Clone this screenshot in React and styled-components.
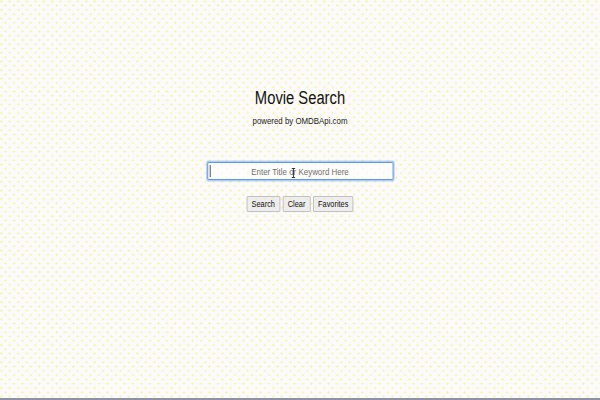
import React from 'react';
import styled, { createGlobalStyle } from 'styled-components';

const GlobalStyle = createGlobalStyle`
  html, body {
    margin: 0;
    padding: 0;
    height: 100%;
  }
  body {
    font-family: "Liberation Sans", Arial, sans-serif;
    background-color: #fbfbfe;
    background-image:
      radial-gradient(circle, #fff07a 0.7px, transparent 1.3px),
      radial-gradient(circle, #fff07a 0.7px, transparent 1.3px);
    background-size: 8.5px 8.6px;
    background-position: -3px -3px, 1.25px 1.3px;
  }
`;

const Page = styled.div`
  min-height: 100vh;
  display: flex;
  flex-direction: column;
  box-sizing: border-box;
`;

const Main = styled.main`
  display: flex;
  flex-direction: column;
  align-items: center;
  padding-top: 88px;
  transform: scaleX(0.82);
  transform-origin: 300px 0;
`;

const Title = styled.h1`
  margin: 0;
  font-size: 18px;
  line-height: 20px;
  font-weight: 400;
  color: #111;
`;

const Subtitle = styled.p`
  margin: 7px 0 0;
  font-size: 9.6px;
  line-height: 12px;
  color: #222;
`;

const SearchBox = styled.div`
  position: relative;
  margin-top: 35px;
`;

const Input = styled.input`
  display: block;
  width: 227px;
  height: 18px;
  box-sizing: border-box;
  padding: 0 4px;
  border: 1px solid #4a8ee2;
  box-shadow: 0 0 0 1.5px rgba(120, 170, 240, 0.55);
  border-radius: 1px;
  background: rgba(255, 255, 255, 0.55);
  font-family: "Liberation Sans", Arial, sans-serif;
  font-size: 9.7px;
  text-align: center;
  outline: none;
  color: #222;

  &::placeholder {
    color: #6f6f6f;
  }
`;

const Caret = styled.span`
  position: absolute;
  left: 3px;
  top: 3px;
  width: 1px;
  height: 12px;
  background: #333;
`;

const Pointer = styled.svg`
  position: absolute;
  left: 102px;
  top: 6px;
`;

const Buttons = styled.div`
  display: flex;
  gap: 3.5px;
  margin-top: 16px;
`;

const Button = styled.button`
  height: 16px;
  box-sizing: border-box;
  padding: 0 5px;
  border: 1px solid #bcbcbc;
  border-radius: 1px;
  background: rgba(228, 228, 232, 0.55);
  font-family: "Liberation Sans", Arial, sans-serif;
  font-size: 9px;
  line-height: 14px;
  color: #111;
`;

const Strip = styled.div`
  margin-top: auto;
  height: 2px;
  background: #8e92a8;
`;

const App = () => {
  return (
    <Page>
      <GlobalStyle />
      <Main>
        <Title>Movie Search</Title>
        <Subtitle>powered by OMDBApi.com</Subtitle>
        <SearchBox>
          <Input type="text" placeholder="Enter Title or Keyword Here" />
          <Caret />
          <Pointer width="6" height="10" viewBox="0 0 6 10">
            <path d="M1 0.5h4M3 0.5v9M1 9.5h4" stroke="#222" strokeWidth="1" fill="none" />
          </Pointer>
        </SearchBox>
        <Buttons>
          <Button>Search</Button>
          <Button>Clear</Button>
          <Button>Favorites</Button>
        </Buttons>
      </Main>
      <Strip />
    </Page>
  );
};

export default App;
